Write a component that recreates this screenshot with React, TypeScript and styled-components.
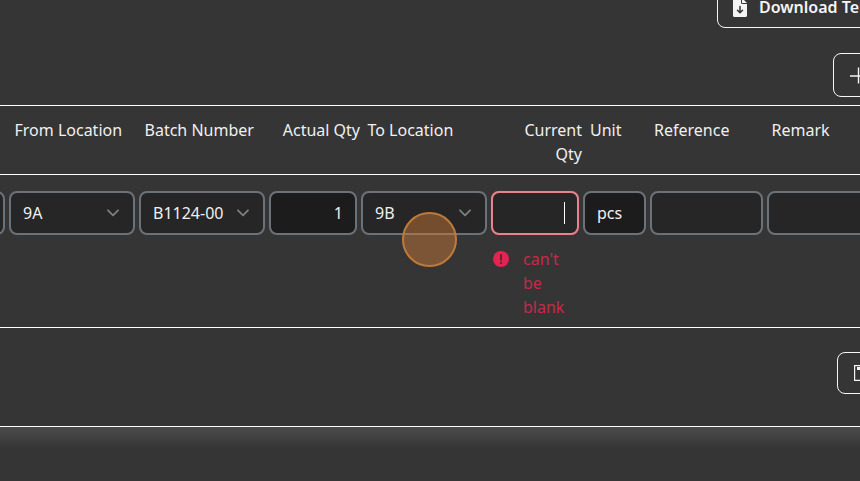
import React from "react";
import styled, { createGlobalStyle } from "styled-components";

const GlobalStyle = createGlobalStyle`
  * { box-sizing: border-box; }
  body {
    margin: 0;
    overflow: hidden;
    background: #353535;
    color: #f0f0f0;
    font: 16px/24px "Noto Sans", sans-serif;
  }
`;

const Page = styled.main`
  width: 860px;
  height: 481px;
  overflow: hidden;
  display: flex;
  flex-direction: column;
`;

const Toolbar = styled.header`
  height: 105px;
  flex: none;
  display: flex;
  flex-direction: column;
  align-items: flex-start;
  overflow: hidden;
`;

const Button = styled.button<{ $left: number; $top: number; $height: number; $pad: number; $gap?: number }>`
  flex: none;
  display: flex;
  align-items: center;
  gap: ${(p) => p.$gap ?? 0}px;
  width: 240px;
  height: ${(p) => p.$height}px;
  margin: ${(p) => p.$top}px 0 0 ${(p) => p.$left}px;
  padding: 0 0 0 ${(p) => p.$pad}px;
  border: 1px solid #f6f6f6;
  border-radius: 8px;
  background: transparent;
  color: #f4f4f4;
  font: 600 16px/24px "Noto Sans", sans-serif;
  white-space: nowrap;
`;

const columns = "130px 130px 92px 130px 92px 67px 117px 140px";

const HeadRow = styled.div`
  flex: none;
  display: grid;
  grid-template-columns: 7px ${columns};
  height: 70px;
  padding-top: 12px;
  border-top: 1px solid #fff;
  border-bottom: 1px solid #fff;
`;

const HeadCell = styled.div<{ $right?: boolean; $pad?: number }>`
  padding-left: ${(p) => p.$pad ?? 8}px;
  margin-right: ${(p) => (p.$right ? -1 : 0)}px;
  text-align: ${(p) => (p.$right ? "right" : "left")};
`;

const BodyRow = styled.div`
  flex: none;
  display: grid;
  grid-template-columns: 7px ${columns};
  height: 153px;
  padding-top: 16px;
  border-bottom: 1px solid #fff;
`;

const Cell = styled.div`
  display: flex;
  flex-direction: column;
  align-items: stretch;
  padding: 0 2px;
  min-width: 0;
`;

const ClippedCell = styled(Cell)`
  align-items: flex-end;
`;

const Field = styled.div<{ $readOnly?: boolean; $right?: boolean; $error?: boolean }>`
  flex: none;
  display: flex;
  align-items: center;
  justify-content: ${(p) => (p.$right ? "flex-end" : "space-between")};
  height: 44px;
  padding: 0 12px;
  border: 2px solid ${(p) => (p.$error ? "#e5848d" : "#6c7279")};
  border-radius: 8px;
  background: ${(p) => (p.$readOnly ? "#1c1c1c" : "#262626")};
  box-shadow: ${(p) => (p.$error ? "0 0 1px 0 #a22b46" : "none")};
  white-space: nowrap;
`;

const ClippedField = styled(Field)`
  width: 100px;
`;

const Caret = styled.span`
  width: 1px;
  height: 22px;
  background: #fff;
`;

const ErrorMessage = styled.div`
  display: grid;
  grid-template-columns: 30px 44px;
  margin-top: 12px;
  padding-left: 2px;
  color: #c52a49;
`;

const ErrorIcon = styled.svg`
  margin-top: 4px;
`;

const ChevronIcon = styled.svg`
  margin-right: 2px;
`;

const Footer = styled.div`
  flex: none;
  height: 99px;
  overflow: hidden;
  border-bottom: 1px solid #fff;
`;

const Below = styled.div`
  flex: 1;
  background: linear-gradient(#4b4b4b, #353535 22px);
`;

const TouchMarker = styled.div`
  position: absolute;
  left: 402px;
  top: 212px;
  width: 55px;
  height: 55px;
  border: 2px solid #bd7a3d;
  border-radius: 50%;
  background: rgba(207, 125, 56, 0.46);
`;

function Chevron() {
  return (
    <ChevronIcon width="12" height="8" viewBox="0 0 12 8" fill="none" stroke="#7b8085" strokeWidth="1.8" strokeLinecap="round" strokeLinejoin="round">
      <path d="M1 1.3 6 6.3 11 1.3" />
    </ChevronIcon>
  );
}

export default function App() {
  return (
    <>
      <GlobalStyle />
      <Page>
        <Toolbar>
          <Button $left={717} $top={-14} $height={42} $pad={15} $gap={12}>
            <svg width="14" height="20" viewBox="0 0 14 20">
              <path fill="#f4f4f4" d="M1.5 1H8v4.5A1.5 1.5 0 0 0 9.5 7H14v11.5a1.5 1.5 0 0 1-1.5 1.5h-11A1.5 1.5 0 0 1 0 18.5v-16A1.5 1.5 0 0 1 1.5 1ZM9 1l5 5H9Z" />
              <path fill="none" stroke="#353535" strokeWidth="1.5" strokeLinecap="round" strokeLinejoin="round" d="M7 9.5v6M4.5 13.2 7 15.7l2.5-2.5" />
            </svg>
            Download Template
          </Button>
          <Button $left={833} $top={25} $height={44} $pad={16}>
            <svg width="17" height="17" viewBox="0 0 17 17" stroke="#f4f4f4" strokeWidth="1.4">
              <path d="M0 9h17M8.5.5v16" />
            </svg>
          </Button>
        </Toolbar>
        <HeadRow>
          <span />
          <HeadCell $pad={7.5}>From Location</HeadCell>
          <HeadCell $pad={7.5}>Batch Number</HeadCell>
          <HeadCell $right>Actual Qty</HeadCell>
          <HeadCell $pad={8.5}>To Location</HeadCell>
          <HeadCell $right>Current Qty</HeadCell>
          <HeadCell $pad={9}>Unit</HeadCell>
          <HeadCell $pad={6}>Reference</HeadCell>
          <HeadCell $pad={6.5}>Remark</HeadCell>
        </HeadRow>
        <BodyRow>
          <ClippedCell><ClippedField /></ClippedCell>
          <Cell><Field>9A<Chevron /></Field></Cell>
          <Cell><Field>B1124-00<Chevron /></Field></Cell>
          <Cell><Field $readOnly $right>1</Field></Cell>
          <Cell><Field>9B<Chevron /></Field></Cell>
          <Cell>
            <Field $right $error><Caret /></Field>
            <ErrorMessage>
              <ErrorIcon width="17" height="17" viewBox="0 0 17 17">
                <circle cx="8" cy="8" r="8" fill="#e32451" />
                <path d="M8 4v4.8" stroke="#53252f" strokeWidth="1.8" strokeLinecap="round" />
                <circle cx="8" cy="11.9" r="1.1" fill="#53252f" />
              </ErrorIcon>
              <span>can't be blank</span>
            </ErrorMessage>
          </Cell>
          <Cell><Field $readOnly>pcs</Field></Cell>
          <Cell><Field /></Cell>
          <Cell><Field /></Cell>
        </BodyRow>
        <Footer>
          <Button $left={837} $top={24} $height={42} $pad={16}>
            <svg width="16" height="16" viewBox="0 0 16 16" fill="none" stroke="#f4f4f4" strokeWidth="1.2">
              <path d="M.6.6h11l3.8 3.8v11H.6Z" />
              <path d="M3 3.5h8" strokeWidth="3" />
            </svg>
          </Button>
        </Footer>
        <Below />
      </Page>
      <TouchMarker />
    </>
  );
}
